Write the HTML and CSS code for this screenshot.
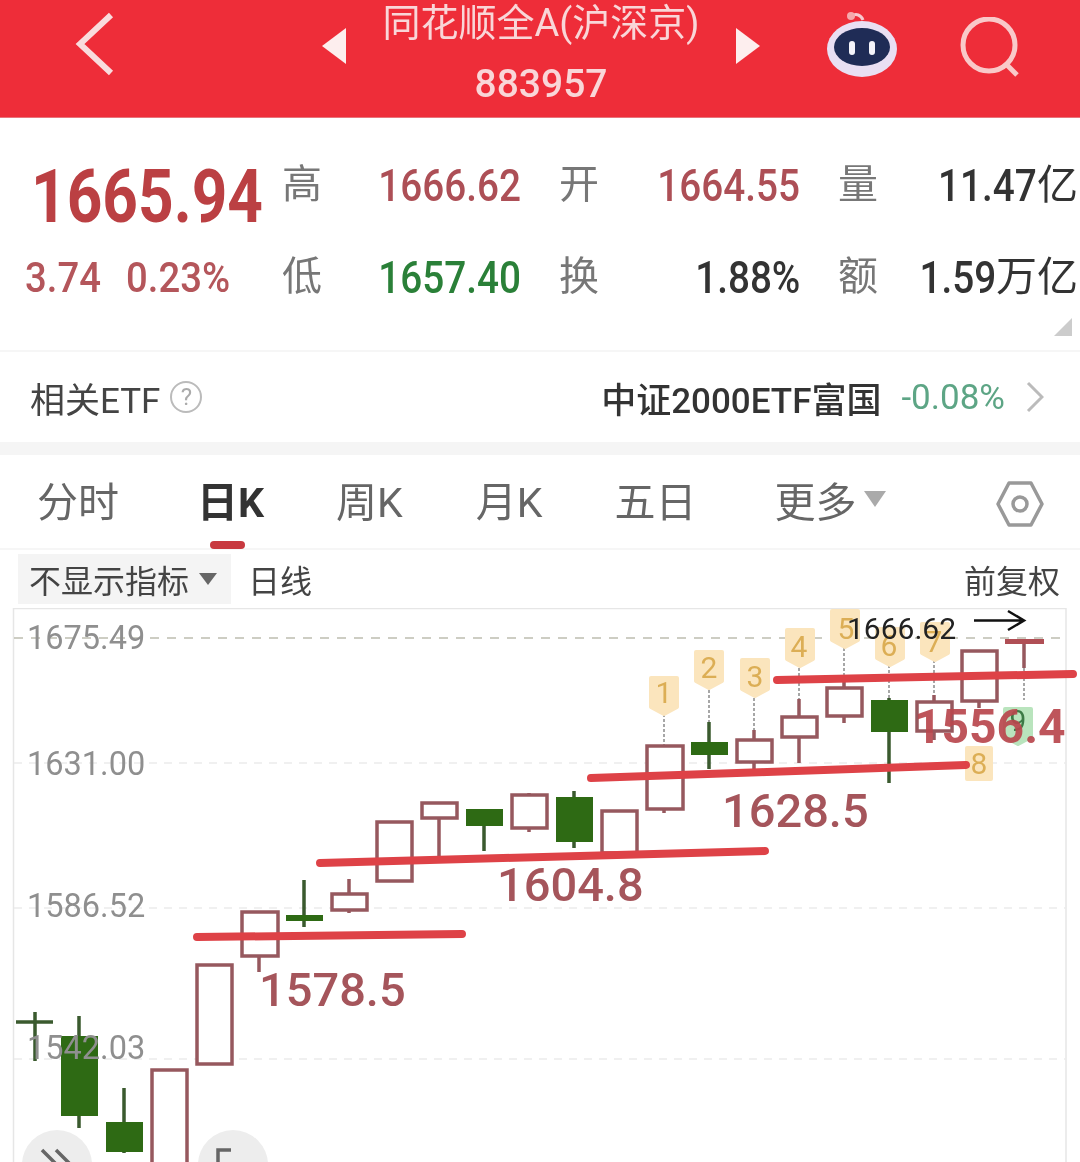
FILE: index.html
```html
<!DOCTYPE html>
<html lang="zh">
<head>
<meta charset="utf-8">
<title>同花顺全A(沪深京)</title>
<link rel="stylesheet" href="styles.css">
</head>
<body>
<div class="page">
  <header class="topbar">
    <svg class="ico-back" viewBox="0 0 40 64"><path d="M36 3 L5 32 L36 61"/></svg>
    <div class="title-wrap">
      <svg class="tri" viewBox="0 0 24 36"><path d="M24 0V36L0 18Z"/></svg>
      <div class="title">
        <div class="title-name">同花顺全A(沪深京)</div>
        <div class="title-code">883957</div>
      </div>
      <svg class="tri" viewBox="0 0 24 36"><path d="M0 0V36L24 18Z"/></svg>
    </div>
    <svg class="ico-robot" viewBox="0 0 74 70">
      <path class="r-ant" d="M27 6C31 3 36 5 38 10"/>
      <circle class="r-dot" cx="26" cy="6" r="4"/>
      <ellipse class="r-head" cx="37" cy="39" rx="35" ry="28"/>
      <ellipse class="r-face" cx="37" cy="37" rx="28" ry="19"/>
      <rect class="r-eye" x="24" y="31" width="6" height="14" rx="3"/>
      <rect class="r-eye" x="44" y="31" width="6" height="14" rx="3"/>
    </svg>
    <svg class="ico-search" viewBox="0 0 64 64"><circle cx="30" cy="28" r="26"/><path d="M47 47L58 58"/></svg>
  </header>

  <section class="quote">
    <div class="q-row">
      <div class="price">1665.94</div>
      <div class="q-item"><span class="q-label">高</span><span class="q-val up"><span class="num">1666.62</span></span></div>
      <div class="q-item"><span class="q-label">开</span><span class="q-val up"><span class="num">1664.55</span></span></div>
      <div class="q-item"><span class="q-label">量</span><span class="q-val dark"><span class="num">11.47</span><span class="cjk">亿</span></span></div>
    </div>
    <div class="q-row">
      <div class="change"><span>3.74</span><span>0.23%</span></div>
      <div class="q-item"><span class="q-label">低</span><span class="q-val down"><span class="num">1657.40</span></span></div>
      <div class="q-item"><span class="q-label">换</span><span class="q-val dark"><span class="num">1.88%</span></span></div>
      <div class="q-item"><span class="q-label">额</span><span class="q-val dark"><span class="num">1.59</span><span class="cjk">万亿</span></span></div>
    </div>
    <span class="corner"></span>
  </section>

  <section class="etf">
    <div class="etf-left"><span>相关ETF</span><span class="help">?</span></div>
    <div class="etf-right">
      <span class="etf-name">中证2000ETF富国</span>
      <span class="etf-pct">-0.08%</span>
      <svg class="etf-arrow" viewBox="0 0 18 32"><path d="M2 2L16 16L2 30"/></svg>
    </div>
  </section>

  <nav class="tabs">
    <span class="tab t1">分时</span>
    <span class="tab t2 active">日K</span>
    <span class="tab t3">周K</span>
    <span class="tab t4">月K</span>
    <span class="tab t5">五日</span>
    <span class="tab t6">更多<i class="more-tri"></i></span>
    <svg class="gear" viewBox="0 0 48 48"><path d="M13 3H35L46 24L35 45H13L2 24Z"/><circle cx="24" cy="24" r="7"/></svg>
  </nav>

  <div class="toolbar">
    <div class="tool-left">
      <span class="indicator">不显示指标<i class="ind-tri"></i></span>
      <span class="period">日线</span>
    </div>
    <span class="adjust">前复权</span>
  </div>

  <svg class="chart" viewBox="0 608 1080 554">
    <!-- frame and grid -->
    <path class="frame" d="M13.5 1162V608.5H1066V1162"/>
    <path class="grid-top" d="M14 638H1066"/>
    <path class="grid" d="M14 763H1066M14 908H1066M14 1059H1066"/>

    <!-- flags -->
    <g class="stems">
      <path d="M664 714V746M709 690V722M754 698V730M799 668V699M844 648V680M889 665V698M934 660V695M1024 668V700"/>
    </g>
    <g class="flag">
      <path d="M651 678h26v29l-13 7l-13-7z"/>
      <path d="M696 652h26v29l-13 7l-13-7z"/>
      <path d="M742 660h26v29l-13 7l-13-7z"/>
      <path d="M787 630h26v29l-13 7l-13-7z"/>
      <path d="M832 611h26v29l-13 7l-13-7z"/>
      <path d="M877 629h26v29l-13 7l-13-7z"/>
      <path d="M922 624h26v29l-13 7l-13-7z"/>
      <rect x="967" y="748" width="24" height="31"/>
    </g>
    <path class="flag-green" d="M1005 709h26v28l-13 7l-13-7z"/>
    <g class="flag-num">
      <text x="664" y="703">1</text>
      <text x="709" y="678">2</text>
      <text x="755" y="687">3</text>
      <text x="799" y="657">4</text>
      <text x="846" y="639">5</text>
      <text x="889" y="656">6</text>
      <text x="934" y="652">7</text>
      <text x="979" y="774">8</text>
    </g>
    <text class="flag-num-green" x="1018" y="731">9</text>

    <!-- rising candles -->
    <g class="wick-up">
      <path d="M259 956V972M349 879V913M439 818V857M529 793V832M664 809V813M754 730V770M799 699V763M844 680V723M934 695V740M979 701V708M1024 644V668"/>
    </g>
    <g class="candle-up">
      <rect x="152" y="1070" width="35" height="110"/>
      <rect x="197" y="965" width="35" height="99"/>
      <rect x="242" y="912" width="36" height="44"/>
      <rect x="332" y="894" width="35" height="16"/>
      <rect x="377" y="822" width="35" height="59"/>
      <rect x="422" y="803" width="35" height="15"/>
      <rect x="512" y="795" width="35" height="33"/>
      <rect x="602" y="811" width="35" height="42"/>
      <rect x="647" y="746" width="36" height="63"/>
      <rect x="737" y="740" width="35" height="22"/>
      <rect x="782" y="717" width="35" height="20"/>
      <rect x="827" y="688" width="35" height="28"/>
      <rect x="917" y="702" width="35" height="29"/>
      <rect x="962" y="651" width="35" height="50"/>
    </g>
    <rect class="candle-flat" x="1005" y="639" width="39" height="5"/>

    <!-- falling candles -->
    <g class="wick-down">
      <path d="M35 1012V1061M16 1022H53M79 1016V1128M124 1088V1153M304 880V927M484 826V851M574 791V848M709 722V769M889 698V783"/>
    </g>
    <g class="candle-down">
      <rect x="61" y="1036" width="37" height="80"/>
      <rect x="106" y="1122" width="37" height="30"/>
      <rect x="286" y="915" width="37" height="6"/>
      <rect x="466" y="809" width="37" height="17"/>
      <rect x="556" y="797" width="37" height="45"/>
      <rect x="691" y="742" width="37" height="13"/>
      <rect x="871" y="700" width="37" height="32"/>
    </g>

    <!-- axis labels -->
    <g class="axis">
      <text x="27" y="649">1675.49</text>
      <text x="27" y="775">1631.00</text>
      <text x="27" y="917">1586.52</text>
      <text x="27" y="1059">1542.03</text>
    </g>

    <!-- trend lines -->
    <g class="trend">
      <path d="M197 937L462 934"/>
      <path d="M320 863L765 851"/>
      <path d="M591 778L966 765"/>
      <path d="M777 680L1073 674"/>
    </g>
    <g class="note">
      <text x="259" y="1006">1578.5</text>
      <text x="497" y="901">1604.8</text>
      <text x="722" y="827">1628.5</text>
    </g>
    <text class="note-bold" x="914" y="743">1556.4</text>

    <!-- high price callout -->
    <text class="high" x="847" y="639">1666.62</text>
    <path class="high-arrow" d="M974 620.5H1024M1008 611L1024 620.5L1008 630"/>

    <!-- floating buttons -->
    <circle class="fab" cx="57" cy="1165" r="35"/>
    <circle class="fab" cx="233" cy="1165" r="35"/>
    <path class="fab-ico" d="M42 1150L62 1170M56 1150L76 1170"/>
    <path class="fab-ico" d="M218 1172V1150H231"/>
  </svg>
</div>
</body>
</html>
```

FILE: styles.css
```css
* { box-sizing: border-box; }
html, body { margin: 0; padding: 0; background: #fff; }
body {
  width: 1080px;
  height: 1162px;
  overflow: hidden;
  font-family: Roboto, "Noto Sans CJK SC", sans-serif;
}
.page { width: 1080px; height: 1162px; display: flex; flex-direction: column; filter: blur(0.45px); }

/* top bar */
.topbar {
  position: relative;
  height: 118px;
  flex: none;
  background: #ee2d39;
  display: flex;
  align-items: flex-start;
  border-bottom: 1px solid #e8747b;
}
.ico-back { width: 40px; height: 64px; margin: 12px 0 0 75px; flex: none; }
.ico-back path { fill: none; stroke: #f9dcdd; stroke-width: 6; }
.title-wrap {
  width: 438px;
  margin-left: 207px;
  display: flex;
  justify-content: space-between;
  flex: none;
}
.tri { width: 24px; height: 36px; margin-top: 28px; flex: none; }
.tri path { fill: #fdeeee; }
.title { color: #f9d6d8; text-align: center; width: 340px; }
.title-name { font-size: 38px; line-height: 46px; white-space: nowrap; margin: 0 -10px; }
.title-code { font-size: 39px; line-height: 42px; margin-top: 17px; font-weight: 500; }
.ico-robot { width: 74px; height: 70px; margin: 10px 0 0 65px; flex: none; }
.r-ant { fill: none; stroke: #f7c9cf; stroke-width: 3; }
.r-dot { fill: #f5a9ac; }
.r-head { fill: #e9dff3; }
.r-face { fill: #1f2c56; }
.r-eye { fill: #f4f4fa; }
.ico-search { width: 64px; height: 64px; margin: 17px 0 0 60px; flex: none; }
.ico-search circle, .ico-search path { fill: none; stroke: #f9c9c9; stroke-width: 5; }

/* quote block */
.quote {
  position: relative;
  height: 234px;
  flex: none;
  padding: 18px 0 0 25px;
  border-bottom: 2px solid #f6f6f6;
}
.q-row {
  display: grid;
  grid-template-columns: 219px 239px 241px 240px;
  column-gap: 38px;
  align-items: center;
  height: 94px;
}
.price {
  font-size: 74px;
  font-weight: 700;
  line-height: 1;
  color: #bb4043;
  white-space: nowrap;
  margin: 24px 0 0 6px;
  transform: scaleX(0.84);
  transform-origin: left center;
}
.change { display: flex; gap: 16px; font-size: 43px; font-weight: 500; line-height: 1; color: #b4565b; white-space: nowrap; }
.change span { display: inline-block; transform: scaleX(0.89); transform-origin: left center; }
.q-item { display: flex; justify-content: space-between; align-items: center; }
.q-label { font-size: 40px; color: #777; line-height: 1; }
.q-val { display: flex; align-items: center; line-height: 1; white-space: nowrap; font-weight: 500; }
.num { display: inline-block; font-size: 45px; transform: scaleX(0.86); transform-origin: right center; }
.cjk { font-size: 41px; font-weight: 400; }
.up { color: #ad4f56; }
.down { color: #2a8038; }
.dark { color: #333; }
.corner {
  position: absolute;
  right: 8px;
  bottom: 14px;
  width: 0;
  height: 0;
  border-left: 18px solid transparent;
  border-bottom: 18px solid #ccc;
}

/* ETF row */
.etf {
  height: 103px;
  flex: none;
  border-bottom: 13px solid #f5f5f5;
  display: flex;
  justify-content: space-between;
  align-items: center;
  padding: 0 36px 0 30px;
}
.etf-left { display: flex; align-items: center; gap: 10px; font-size: 35px; color: #444; }
.help {
  width: 32px;
  height: 32px;
  border: 2px solid #bbb;
  border-radius: 50%;
  color: #aaa;
  font-size: 24px;
  line-height: 28px;
  text-align: center;
}
.etf-right { display: flex; align-items: center; }
.etf-name { font-size: 35px; font-weight: 500; color: #333; }
.etf-pct { font-size: 35px; color: #5da585; margin-left: 20px; }
.etf-arrow { width: 18px; height: 32px; margin-left: 21px; }
.etf-arrow path { fill: none; stroke: #bbb; stroke-width: 3; }

/* tabs */
.tabs {
  position: relative;
  height: 95px;
  flex: none;
  padding: 0 36px 0 37px;
  display: flex;
  align-items: center;
  border-bottom: 2px solid #f6f6f6;
  font-size: 41px;
  color: #666;
}
.tab { position: relative; white-space: nowrap; line-height: 1; margin-top: 4px; }
.t2 { margin-left: 78px; }
.t3 { margin-left: 72px; }
.t4 { margin-left: 73px; }
.t5 { margin-left: 72px; }
.t6 { margin-left: 78px; }
.active { color: #333; font-weight: 700; }
.active::after {
  content: "";
  position: absolute;
  left: 13px;
  bottom: -25px;
  width: 35px;
  height: 8px;
  border-radius: 4px;
  background: #c8393f;
}
.more-tri {
  display: inline-block;
  margin-left: 7px;
  vertical-align: 10px;
  border-left: 11px solid transparent;
  border-right: 11px solid transparent;
  border-top: 16px solid #aaa;
}
.gear { width: 48px; height: 48px; margin: 4px 0 0 auto; }
.gear path, .gear circle { fill: none; stroke: #999; stroke-width: 3.5; stroke-linejoin: round; }

/* toolbar */
.toolbar {
  height: 58px;
  flex: none;
  display: flex;
  justify-content: space-between;
  align-items: center;
  padding: 0 20px 0 18px;
  font-size: 32px;
  color: #444;
}
.tool-left { display: flex; align-items: center; gap: 17px; }
.indicator {
  display: flex;
  align-items: center;
  height: 50px;
  padding: 0 11px;
  background: #f4f4f4;
}
.ind-tri {
  margin-left: 10px;
  margin-right: 3px;
  border-left: 9px solid transparent;
  border-right: 9px solid transparent;
  border-top: 12px solid #666;
}

/* chart */
.chart { display: block; width: 1080px; height: 554px; flex: none; }
.chart text { font-family: Roboto, sans-serif; }
.frame { fill: none; stroke: #e6e6e6; stroke-width: 1.5; }
.grid { fill: none; stroke: #ececec; stroke-width: 1.5; stroke-dasharray: 8 7; }
.grid-top { fill: none; stroke: #bdbdb0; stroke-width: 1.5; stroke-dasharray: 9 8; }
.stems path { fill: none; stroke: #8a8a8a; stroke-width: 1.5; stroke-dasharray: 3 2; }
.flag path, .flag rect { fill: #fbe5bd; stroke: #fbe5bd; stroke-width: 4; stroke-linejoin: round; }
.flag-green { fill: #b9e4bd; stroke: #b9e4bd; stroke-width: 4; stroke-linejoin: round; }
.flag-num text { font-size: 30px; fill: #dcae55; text-anchor: middle; }
.chart .flag-num-green { font-size: 30px; fill: #3c7a45; text-anchor: middle; }
.wick-up path { fill: none; stroke: #96585e; stroke-width: 3.5; }
.candle-up rect { fill: #fff; stroke: #96585e; stroke-width: 3.5; }
.candle-flat { fill: #b04f55; }
.wick-down path { fill: none; stroke: #3a5a2e; stroke-width: 3.5; }
.candle-down rect { fill: #2e6a14; }
.axis text { font-size: 32.5px; fill: #8f8f8f; }
.trend path { fill: none; stroke: #de4247; stroke-width: 8; stroke-linecap: round; }
.note text { font-size: 47px; font-weight: 500; fill: #a5555b; }
.chart .note-bold { font-size: 48px; font-weight: 700; fill: #b8474d; fill-opacity: 0.92; }
.high { font-size: 30px; fill: #222; }
.high-arrow { fill: none; stroke: #111; stroke-width: 2.5; }
.fab { fill: #ededed; }
.fab-ico { fill: none; stroke: #666; stroke-width: 3.5; }
```
